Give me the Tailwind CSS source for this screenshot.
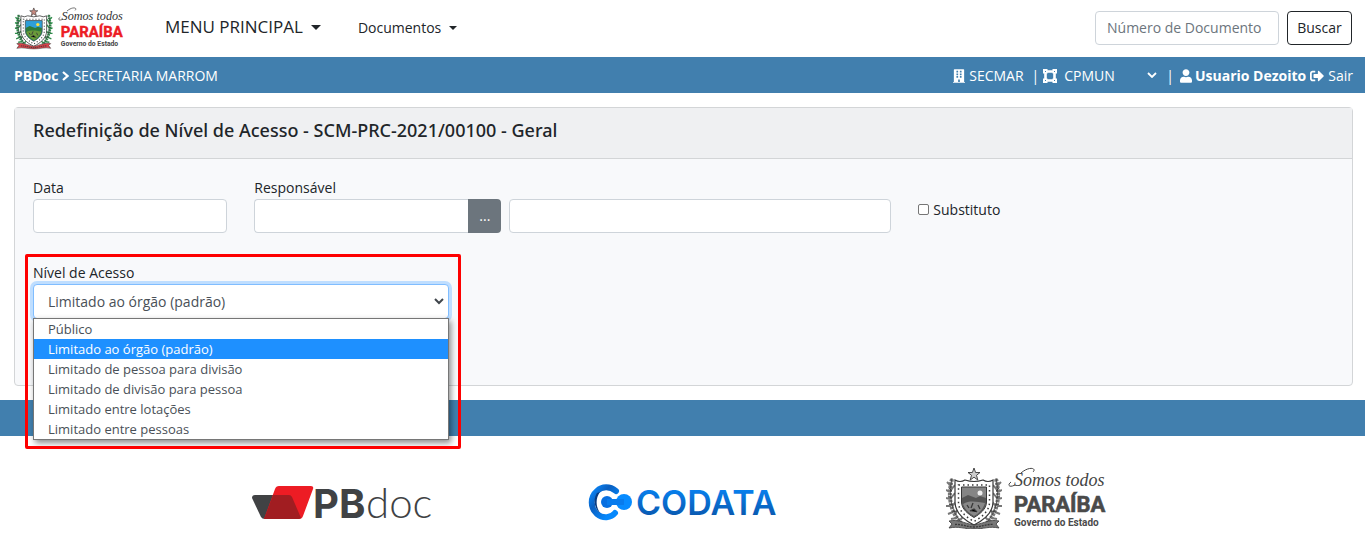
<!DOCTYPE html>
<html lang="pt-BR">
<head>
<meta charset="utf-8">
<meta name="viewport" content="width=device-width, initial-scale=1">
<title>PBDoc - Redefinição de Nível de Acesso</title>
<script src="https://cdn.jsdelivr.net/npm/@tailwindcss/browser@4"></script>
</head>
<body class="bg-white font-['Open_Sans','Noto_Sans',sans-serif] text-sm text-[#212529]">

<svg class="hidden" aria-hidden="true">
  <!-- State coat of arms; the fills come from the CSS variables of the place of use -->
  <symbol id="arms" viewBox="0 0 56 62">
    <g fill="none" stroke="var(--leaf)" stroke-width="4" stroke-dasharray="2.500 1">
      <path d="M6 11C2 26 3 42 15 55"/><path d="M50 11C54 26 53 42 41 55"/>
    </g>
    <g fill="none" stroke="var(--leaf)" stroke-width="2">
      <path d="M5 18L1 14M4 24L0 22M4 31L0 30M5 38L0 38M7 44L2 46M11 50L5 51M5 22L9 17M5 30L9 25M6 38L10 34M9 46L12 41M14 52L18 48"/>
      <path d="M51 18L55 14M52 24L56 22M52 31L56 30M51 38L56 38M49 44L54 46M45 50L51 51M51 22L47 17M51 30L47 25M50 38L46 34M47 46L44 41M42 52L38 48"/>
    </g>
    <g fill="none" stroke="var(--ink)" stroke-width=".8">
      <path d="M6 10C3 26 4 42 15 54M50 10C53 26 52 42 41 54M3 20l3 3M2 28l4 2M3 36l4 1M6 44l5-1M53 20l-3 3M54 28l-4 2M53 36l-4 1M50 44l-5-1"/>
    </g>
    <path d="M9 12Q14 15 19 12Q28 15 37 12Q42 15 47 12V34C47 45 38 52 28 57C18 52 9 45 9 34Z" fill="#fff" stroke="var(--ink)" stroke-width="1.200"/>
    <path d="M12.500 17H43.500V34C43.500 43 36 49 28 53.500C20 49 12.500 43 12.500 34Z" fill="none" stroke="var(--ink)" stroke-width="1.500" stroke-dasharray="1.500 3"/>
    <path d="M15.500 19H40.500V34C40.500 41 34 46 28 49.500C22 46 15.500 41 15.500 34Z" fill="var(--sky)" stroke="var(--ink)"/>
    <path d="M16 30L22 27L30 30L34 28L40 30V34C40 41 34 46 28 49C22 46 16 41 16 34Z" fill="var(--hill)"/>
    <path d="M17 36C24 32 31 34 39 35C37 42 32 46 28 48C23 45 19 42 17 36Z" fill="var(--field)"/>
    <path d="M21 37l2 3M27 35l-2 5M32 37l2 4M24 43l4-2 3 3" stroke="var(--ink)" stroke-width="1.300"/>
    <circle cx="34" cy="25" r="2.500" fill="var(--sun)"/>
    <path d="M28 0L29.600 4.500H34L30.500 7.300L31.800 12L28 9.200L24.200 12L25.500 7.300L22 4.500H26.400Z" fill="var(--star)" stroke="var(--ink)" stroke-width=".9"/>
    <path d="M3 53C12 51 17 55 28 57C39 55 44 51 53 53L50 56L53 60C43 58 38 61 28 61C18 61 13 58 3 60L6 56Z" fill="var(--band)" stroke="var(--ink)" stroke-width=".8"/>
    <path d="M9 56.500C16 56 21 59 28 59C35 59 40 56 47 56.500" fill="none" stroke="var(--ink)" stroke-width="1.300" stroke-dasharray="2 1"/>
  </symbol>
</svg>

<header class="flex h-[57px] items-center pr-[13px] pb-[2px] pl-[14px]">
  <a href="#" aria-label="Somos todos Paraíba" class="block">
    <svg viewBox="0 0 162 62" class="h-[42px] w-[110px] overflow-visible [--band:#d8434a] [--field:#6a9a3a] [--hill:#2f7a3a] [--ink:#3a3a3a] [--leaf:#2e8b4a] [--sky:#2f9fd8] [--star:#c98a80] [--sun:#ffe040]">
      <use href="#arms" x="1" y="1" width="56" height="62"/>
      <path d="M78 6C86 -1 94 1 90 5M72 18C66 21 64 18 68 15" fill="none" stroke="#333" stroke-width="1"/>
      <text x="70" y="19" font-family="Liberation Serif" font-style="italic" font-size="18" fill="#333">Somos todos</text>
      <text x="69" y="45" font-family="Roboto" font-weight="700" font-size="22" fill="#ec1c24" stroke="#ec1c24" stroke-width=".6">PARAÍBA</text>
      <text x="69" y="58" font-family="Roboto" font-weight="700" font-size="10" fill="#444">Governo do Estado</text>
    </svg>
  </a>
  <nav class="flex flex-1 items-center">
    <button type="button" class="ml-[41px] flex items-center gap-2 text-[17px]">MENU PRINCIPAL
      <svg viewBox="0 0 10 5" class="h-[5px] w-[10px]"><path d="M0 0H10L5 5Z" fill="#212529"/></svg></button>
    <button type="button" class="ml-[37px] flex items-center gap-2">Documentos
      <svg viewBox="0 0 8 4" class="h-1 w-2"><path d="M0 0H8L4 4Z" fill="#212529"/></svg></button>
  </nav>
  <form class="flex gap-2">
    <input type="text" aria-label="Número de Documento" placeholder="Número de Documento" class="h-[34px] w-[184px] rounded-[4px] border border-[#ced4da] px-[11px] placeholder:text-[#6c757d]">
    <button type="button" class="h-[34px] w-[65px] rounded-[4px] border border-[#212529]">Buscar</button>
  </form>
</header>

<div class="flex h-9 items-center justify-between bg-[#417fae] pt-[2px] pr-[12px] pl-[14px] text-white">
  <div class="flex items-center gap-1">
    <strong>PBDoc</strong>
    <svg viewBox="0 0 7 10" class="h-[10px] w-[7px]"><path d="M1 1L5.500 5L1 9" fill="none" stroke="#fff" stroke-width="2.200"/></svg>
    <span>SECRETARIA MARROM</span>
  </div>
  <div class="flex items-center">
    <svg viewBox="0 0 448 512" class="mr-1 h-[14px] w-[12px]" fill="#fff"><path d="M436 480h-20V24c0-13.300-10.700-24-24-24H56C42.700 0 32 10.700 32 24v456H12c-6.600 0-12 5.400-12 12v20h448v-20c0-6.600-5.400-12-12-12zM128 76c0-6.600 5.400-12 12-12h40c6.600 0 12 5.400 12 12v40c0 6.600-5.400 12-12 12h-40c-6.600 0-12-5.400-12-12V76zm0 96c0-6.600 5.400-12 12-12h40c6.600 0 12 5.400 12 12v40c0 6.600-5.400 12-12 12h-40c-6.600 0-12-5.400-12-12v-40zm52 148h-40c-6.600 0-12-5.400-12-12v-40c0-6.600 5.400-12 12-12h40c6.600 0 12 5.400 12 12v40c0 6.600-5.400 12-12 12zm76 160h-64v-84c0-6.600 5.400-12 12-12h40c6.600 0 12 5.400 12 12v84zm64-172c0 6.600-5.400 12-12 12h-40c-6.600 0-12-5.400-12-12v-40c0-6.600 5.400-12 12-12h40c6.600 0 12 5.400 12 12v40zm0-96c0 6.600-5.400 12-12 12h-40c-6.600 0-12-5.400-12-12v-40c0-6.600 5.400-12 12-12h40c6.600 0 12 5.400 12 12v40zm0-96c0 6.600-5.400 12-12 12h-40c-6.600 0-12-5.400-12-12V76c0-6.600 5.400-12 12-12h40c6.600 0 12 5.400 12 12v40z"/></svg>
    <span>SECMAR</span><span class="mr-1 ml-2">|</span>
    <svg viewBox="0 0 14 14" class="h-[14px] w-[14px]"><path d="M2.500 2.500h9v9h-9z" fill="none" stroke="#fff" stroke-width="2.600"/><path d="M0 0h4.500v4.500H0zM9.500 0H14v4.500H9.500zM0 9.500h4.500V14H0zM9.500 9.500H14V14H9.500z" fill="#fff"/><path d="M2 2h1v1H2zM11 2h1v1h-1zM2 11h1v1H2zM11 11h1v1h-1z" fill="#417fae"/></svg>
    <div class="relative">
      <select aria-label="Lotação" class="w-[108px] appearance-none bg-transparent pl-[7px]"><option>CPMUN</option></select>
      <svg viewBox="0 0 10 6" class="pointer-events-none absolute top-[6px] right-2 h-[6px] w-[10px]"><path d="M1 1L5 5L9 1" fill="none" stroke="#fff" stroke-width="1.800"/></svg>
    </div>
    <span class="mr-[6px] ml-[1px]">|</span>
    <svg viewBox="0 0 448 512" class="mr-[3px] h-[14px] w-[12px]" fill="#fff"><path d="M224 256c70.700 0 128-57.300 128-128S294.700 0 224 0 96 57.300 96 128s57.300 128 128 128zm89.600 32h-16.700c-22.200 10.200-46.900 16-72.900 16s-50.600-5.800-72.900-16h-16.700C60.200 288 0 348.200 0 422.400V464c0 26.500 21.500 48 48 48h352c26.500 0 48-21.500 48-48v-41.600c0-74.200-60.200-134.400-134.400-134.400z"/></svg>
    <strong>Usuario Dezoito</strong>
    <svg viewBox="0 0 512 512" class="mx-1 h-[14px] w-[14px]" fill="#fff"><path d="M497 273L329 441c-15 15-41 4.500-41-17v-96H152c-13.300 0-24-10.700-24-24v-96c0-13.300 10.700-24 24-24h136V88c0-21.400 25.900-32 41-17l168 168c9.300 9.400 9.300 24.600 0 34zM192 436v-40c0-6.600-5.400-12-12-12H96c-17.700 0-32-14.300-32-32V160c0-17.700 14.300-32 32-32h84c6.600 0 12-5.400 12-12V76c0-6.600-5.400-12-12-12H96c-53 0-96 43-96 96v192c0 53 43 96 96 96h84c6.600 0 12-5.400 12-12z"/></svg>
    <a href="#">Sair</a>
  </div>
</div>

<main class="pt-[14px] pr-[12px] pl-[14px]">
  <section class="rounded-[4px] border border-[#d3d5d7] bg-[#f8f9fb]">
    <div class="h-[51px] border-b border-[#d3d5d7] bg-[#eff0f2] px-[18px] pt-[10px]">
      <h1 class="font-['Noto_Sans',sans-serif] text-lg leading-6 font-medium">Redefinição de Nível de Acesso - SCM-PRC-2021/00100 - Geral</h1>
    </div>
    <form class="grid h-[226px] grid-cols-12 content-start gap-x-[27px] gap-y-[30px] px-[18px] pt-[19px]">
      <div class="col-span-2">
        <label for="data" class="block h-[21px]">Data</label>
        <input id="data" type="text" class="h-[34px] w-full rounded-[4px] border border-[#ced4da] bg-white px-3">
      </div>
      <div class="col-span-6">
        <label for="resp" class="block h-[21px]">Responsável</label>
        <div class="grid grid-cols-[247fr_382fr] gap-2">
          <div class="flex">
            <input id="resp" type="text" class="h-[34px] w-full min-w-0 flex-1 rounded-l-[4px] border border-r-0 border-[#ced4da] bg-white px-3">
            <button type="button" aria-label="Buscar responsável" class="h-[34px] w-[33px] rounded-r-[4px] bg-[#6c757d] text-white">...</button>
          </div>
          <input type="text" aria-label="Nome do responsável" class="h-[34px] w-full rounded-[4px] border border-[#ced4da] bg-white px-3">
        </div>
      </div>
      <div class="col-span-4 flex items-start gap-1 pt-[22px]">
        <input id="sub" type="checkbox" class="mt-1 h-[11px] w-[11px] appearance-none rounded-[2px] border border-[#767676] bg-white">
        <label for="sub">Substituto</label>
      </div>
      <div class="relative col-span-4">
        <label for="nivel" class="block h-[21px]">Nível de Acesso</label>
        <div class="relative">
          <select id="nivel" class="h-[35px] w-full appearance-none rounded-[4px] border border-[#80bdff] bg-white px-[14px] text-[#495057] ring-3 ring-[#bfdeff]"><option>Limitado ao órgão (padrão)</option></select>
          <svg viewBox="0 0 10 7" class="pointer-events-none absolute top-[14px] right-[5px] h-[7px] w-[10px]"><path d="M1 1L5 5L9 1" fill="none" stroke="#40464c" stroke-width="2"/></svg>
          <ul role="listbox" aria-label="Nível de Acesso" class="absolute top-[34px] right-0 left-0 z-10 border border-[#767676] bg-white text-[13px] leading-5 text-[#495057] shadow-[2px_3px_6px_rgba(0,0,0,0.45)]">
            <li role="option" class="px-[14px]">Público</li>
            <li role="option" aria-selected="true" class="bg-[#1e90ff] px-[14px] text-white">Limitado ao órgão (padrão)</li>
            <li role="option" class="px-[14px]">Limitado de pessoa para divisão</li>
            <li role="option" class="px-[14px]">Limitado de divisão para pessoa</li>
            <li role="option" class="px-[14px]">Limitado entre lotações</li>
            <li role="option" class="px-[14px]">Limitado entre pessoas</li>
          </ul>
        </div>
        <div class="pointer-events-none absolute -top-[9px] -right-3 -left-2 z-20 h-[195px] rounded-[2px] border-3 border-[#fe0000]"></div>
      </div>
    </form>
  </section>
</main>

<footer class="mt-[14px]">
  <div class="h-9 bg-[#417fae]"></div>
  <div class="mx-auto grid w-3/4 grid-cols-3 items-start pt-[31px] pl-1">
    <svg viewBox="0 0 184 40" role="img" aria-label="PBdoc" class="mt-[17px] h-10 w-[184px] justify-self-center overflow-visible">
      <path d="M2 11H36L46 35H12Q9 35 8 33L-1 14Q-1 11 2 11Z" fill="#404244"/>
      <path d="M26 2H58Q61 2 60 5L50 32Q49 35 46 35H11L22 5Q23 2 26 2Z" fill="#ed1c24"/>
      <path d="M20 11H36Q38 11 39 13L48 34Q47 35 45 35H11Z" fill="#a11d21"/>
      <text x="60" y="34" font-family="Inter" font-weight="700" font-size="40" fill="#404244">PB</text>
      <text x="113" y="34" font-family="Lato" font-weight="300" font-size="42" fill="#404244">doc</text>
    </svg>
    <svg viewBox="0 0 190 40" role="img" aria-label="CODATA" class="mt-[17px] h-10 w-[190px] justify-self-center overflow-visible">
      <defs><linearGradient id="cg" x1="0" y1="0" x2="0" y2="1"><stop offset="0" stop-color="#078bff"/><stop offset="1" stop-color="#0a4fa0"/></linearGradient>
      <linearGradient id="co" x1="0" y1="0" x2="1" y2="1"><stop offset="0" stop-color="#0a8bff"/><stop offset=".35" stop-color="#0a5fc0"/><stop offset=".8" stop-color="#0688fc"/></linearGradient></defs>
      <path d="M27 7C21 2 13 2 8 7C1 13 1 24 8 30C14 35 22 34 26 29" fill="none" stroke="url(#co)" stroke-width="6" stroke-linecap="round"/>
      <path d="M8 9C4 15 5 24 11 29C7 23 6 15 11 8Z" fill="#083b80"/>
      <circle cx="18" cy="18" r="6" fill="#086fe0"/><circle cx="35" cy="18" r="8" fill="#078bff"/><path d="M18 15H35V21H18Z" fill="#087bed"/>
      <text x="47" y="31" font-family="Inter" font-weight="600" font-size="34" fill="url(#cg)">CODATA</text>
    </svg>
    <svg viewBox="0 0 162 62" role="img" aria-label="Somos todos Paraíba - Governo do Estado" class="h-[62px] w-[162px] justify-self-center overflow-visible [--band:#777] [--field:#888] [--hill:#555] [--ink:#383838] [--leaf:#777] [--sky:#858585] [--star:#ccc] [--sun:#eee]">
      <use href="#arms" x="3" y="1" width="56" height="62"/>
      <path d="M78 6C86 -1 94 1 90 5M72 18C66 21 64 18 68 15" fill="none" stroke="#444" stroke-width="1"/>
      <text x="71" y="19" font-family="Liberation Serif" font-style="italic" font-size="18" fill="#444">Somos todos</text>
      <text x="71" y="45" font-family="Roboto" font-weight="700" font-size="22" fill="#4a4a4a" stroke="#4a4a4a" stroke-width=".6">PARAÍBA</text>
      <text x="71" y="59" font-family="Roboto" font-weight="700" font-size="10" fill="#4a4a4a">Governo do Estado</text>
    </svg>
  </div>
</footer>
</body>
</html>
